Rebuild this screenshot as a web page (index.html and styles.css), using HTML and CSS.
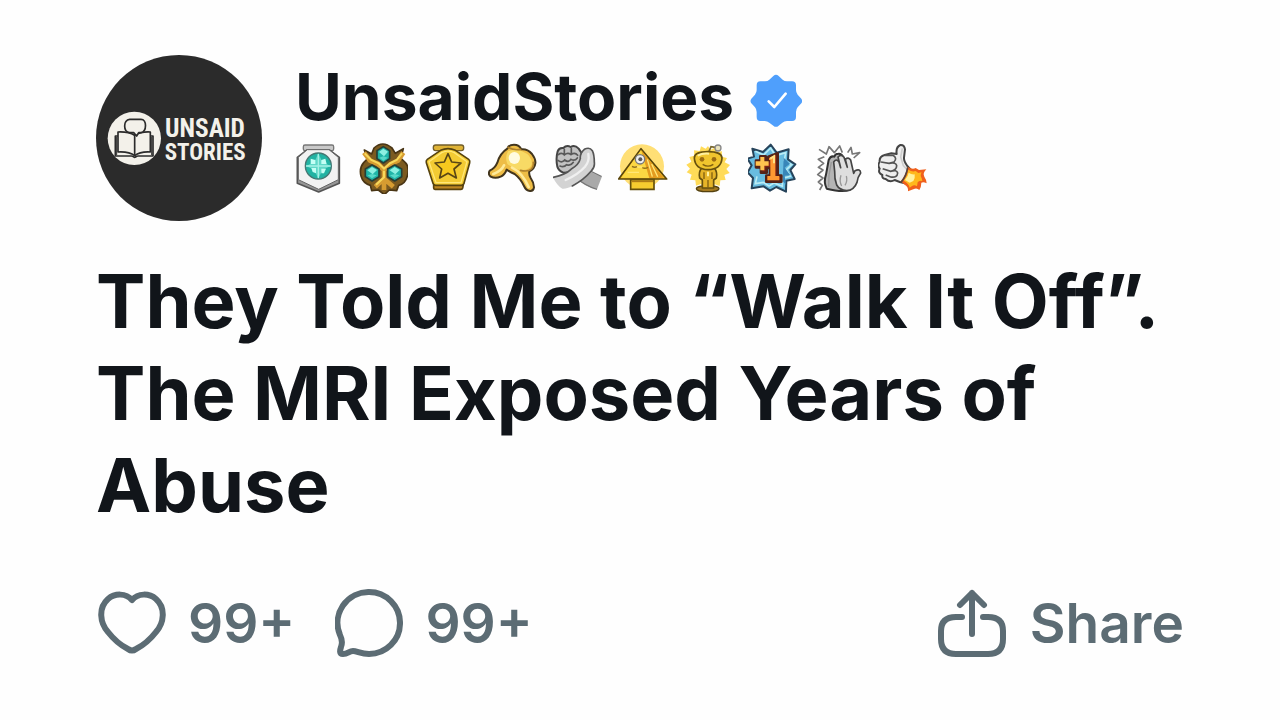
FILE: index.html
```
<!DOCTYPE html>
<html lang="en">
<head>
    <meta charset="UTF-8">
    <meta name="viewport" content="width=device-width, initial-scale=1.0">
    <title>UnsaidStories</title>
    <link rel="stylesheet" href="styles.css">
</head>
<body>
    <article class="post">
        <header class="header">
            <svg class="avatar" viewBox="0 0 498 498" role="img" aria-label="Unsaid Stories">
                <circle cx="249" cy="249" r="249" fill="#2b2b2b"/>
                <circle cx="115" cy="250" r="80" fill="#f3f1ea"/>
                <g fill="none" stroke="#2b2b2b" stroke-width="5" stroke-linejoin="round" stroke-linecap="round">
                    <path d="M66 243h-8v60h48c6 0 7 4 10 4s5-4 10-4h45v-60h-8"/>
                    <path d="M62 247v52M167 247v52" stroke-width="3"/>
                    <path d="M66 231c18-1 35 1 50 10 15-9 30-11 47-10v60c-17-1-33 0-47 11-14-11-32-12-50-11z" fill="#f3f1ea"/>
                    <path d="M116 241v60"/>
                    <path d="M101 193h34c18 0 18 36 0 40h-7l-6 10-9-10h-12c-20-3-20-38 0-40z" fill="#f3f1ea"/>
                </g>
                <g class="avatar-text" fill="#f3f1ea">
                    <text x="207" y="246">UNSAID</text>
                    <text x="206" y="316" class="avatar-text-small">STORIES</text>
                </g>
            </svg>
            <div class="author">
                <div class="name-row">
                    <h2 class="name">UnsaidStories</h2>
                    <svg class="verified" viewBox="0 0 156 162" role="img" aria-label="Verified">
                        <path d="M70 6q8-7 16 0l12 11q5 5 13 5h15q12 0 12 12v14q0 8 5 14l11 12q5 7 0 14l-11 12q-5 6-5 14v14q0 13-12 13h-15q-8 0-14 5l-11 9q-8 7-16 0l-12-9q-6-5-14-5H31q-11 0-11-13v-14q0-8-5-14L4 88q-5-7 0-14l11-12q5-6 5-14V34q0-12 11-12h14q8 0 13-5z" fill="#4f9ffc"/>
                        <path d="M56 82l17 17 34-40" fill="none" stroke="#fff" stroke-width="8" stroke-linecap="round" stroke-linejoin="round"/>
                    </svg>
                </div>
                <div class="badges">
                    <!-- hexagon medal -->
                    <svg viewBox="9 18 150 156">
                        <rect x="40" y="27" width="91" height="17" rx="5" fill="#c9c9c9" stroke="#777" stroke-width="4"/>
                        <path d="M51 42h67l30 22v78l-62 26-64-26V64z" fill="#969696" stroke="#555" stroke-width="5" stroke-linejoin="round"/>
                        <path d="M52 41h65l28 23v67l-59 29-61-29V64z" fill="#f2f2f2" stroke="#666" stroke-width="3" stroke-linejoin="round"/>
                        <circle cx="85" cy="90" r="39" fill="#22b3a3" stroke="#457773" stroke-width="4"/>
                        <path d="M85 52l12 26 25 12-25 12-12 26-12-26-25-12 25-12z" fill="#60d8c8"/>
                        <path d="M85 54v72M48 90h74" stroke="#a4f1e5" stroke-width="4"/>
                        <path d="M62 68l14 4v12H62zM94 72l12-4 4 16H94zM64 96h14v16l-10-4zM94 98h14l-6 14h-8z" fill="#c5fff5"/>
                    </svg>
                    <!-- three gems -->
                    <svg viewBox="204 18 150 156">
                        <path d="M252 36q26-24 54 0l10 16 24-14-8 28 14 14q14 14 6 40-6 24-26 28l-6 16-22-2-15 14-18-14-20 2-4-16q-22-6-28-28-6-24 8-40l12-12-10-26 22 12z" fill="#7b5a20" stroke="#493515" stroke-width="5" stroke-linejoin="round"/>
                        <path d="M222 50l18 24 24 10 18 18 20-18 22-10 16-24M282 102v26l-26 24M282 128l28 24M282 128v34" fill="none" stroke="#d79c31" stroke-width="14" stroke-linejoin="round"/>
                        <path d="M224 52l20 20 22 10 16 16 18-16 20-10 16-20M282 104v20l-24 22" fill="none" stroke="#f7d95c" stroke-width="6"/>
                        <g fill="#20b5a8" stroke="#263f37" stroke-width="5" stroke-linejoin="round">
                            <path d="M280 32l19 12v24l-19 13-19-13V44z"/>
                            <path d="M246 87l21 12v23l-21 13-20-13V99z"/>
                            <path d="M314 87l21 12v23l-21 13-21-13V99z"/>
                        </g>
                        <path d="M280 38l14 9-12 14-15-13zM246 93l15 9-13 13-16-12zM314 93l15 9-13 13-17-12z" fill="#8df0e2"/>
                        <path d="M268 65l12 9 13-9-13-4zM233 118l13 9 14-9-14-4zM300 118l14 9 14-9-14-4z" fill="#58d8c8"/>
                    </svg>
                    <!-- star medal -->
                    <svg viewBox="9 18 150 156">
                        <rect x="40" y="27" width="91" height="17" rx="7" fill="#dfb336" stroke="#725e2b" stroke-width="4"/>
                        <path d="M41 140v16q0 4 4 4h78q4 0 5-4l3-16z" fill="#bd8622" stroke="#59420d" stroke-width="5" stroke-linejoin="round"/>
                        <path d="M62 43q22-10 44 0l40 27q5 4 3 10l-17 62q-2 6-8 6H47q-6 0-8-6L19 80q-2-6 3-10z" fill="#f3cb33" stroke="#55420e" stroke-width="5" stroke-linejoin="round"/>
                        <path d="M65 50q20-9 38 0l38 27-18 63H48L27 77z" fill="none" stroke="#ffe777" stroke-width="4"/>
                        <path d="M84 53l11 25 28 3-21 18 7 27-25-14-25 14 6-27-20-18 28-3z" fill="#f7c91e" stroke="#594615" stroke-width="5" stroke-linejoin="round"/>
                    </svg>
                    <!-- hand pointing down -->
                    <svg viewBox="204 18 150 156">
                        <path d="M262 38q4-12 20-12 16 0 22 14 18-2 32 14 12 16 10 28-2 16-18 24-2 10 4 20 10 14 10 28-2 12-12 11-12-1-18-15-10-22-28-36-14-6-24-13-6 16-18 21-16 7-30 0-9-8-3-18 16-7 23-24 8-28 30-42z" fill="#eebd46" stroke="#42351d" stroke-width="6" stroke-linejoin="round"/>
                        <path d="M264 46q22-10 42 0 30 12 30 38-6 18-30 18-24-2-44-18-8-20 2-38z" fill="#f8da65"/>
                        <ellipse cx="283" cy="66" rx="17" ry="18" fill="#fffbe0"/>
                        <path d="M276 95q30 14 50 58M252 88q-8 18-32 26" fill="none" stroke="#ffeb9a" stroke-width="8" stroke-linecap="round"/>
                        <path d="M302 103q14 4 26 0 14-6 12-24M264 34q18 10 38 6" fill="none" stroke="#ad802d" stroke-width="5" stroke-linecap="round"/>
                    </svg>
                    <!-- clasped hands -->
                    <svg viewBox="24 18 150 156">
                        <path d="M92 122l34-20 44 22-14 36q-36-8-64-38z" fill="#a9a9a9"/>
                        <path d="M92 124q28 26 64 36M130 102l40 20" fill="none" stroke="#777" stroke-width="4"/>
                        <path d="M38 46q4-12 17-10 10-10 22-3 12-8 24 5l12 18 2 34-26 18-34 2q-14-5-18-18-5-24 1-46z" fill="#c2c2c2" stroke="#444" stroke-width="6" stroke-linejoin="round"/>
                        <path d="M118 40q16-8 24 4 6 12 6 36 2 14-10 26-22 26-56 44-20 10-30 8-16-8-28-34 38-8 54-24 26-14 28-32 2-16 12-28z" fill="#d3d3d3"/>
                        <path d="M106 68q-2-16 12-28 16-8 24 4 6 12 6 36 2 14-10 26-22 26-56 44M24 124q38-8 54-24 24-14 28-32" fill="none" stroke="#555" stroke-width="5" stroke-linecap="round"/>
                        <path d="M40 56q10-8 18 1 10-9 20-1 12-8 20 2M39 73q12 9 20-1 11 9 19-2 11 7 19-4M45 90q12 5 20-4 12 5 20-7M58 40v14M79 38v14" fill="none" stroke="#595959" stroke-width="5" stroke-linecap="round"/>
                        <path d="M130 54q4 22-10 38-22 24-58 40" fill="none" stroke="#f0f0f0" stroke-width="7" stroke-linecap="round"/>
                    </svg>
                    <!-- pyramid with eye -->
                    <svg viewBox="219 18 150 156">
                        <circle cx="291" cy="91" r="66" fill="#ffdf75"/>
                        <path d="M288 38l77 91H221z" fill="#f4bd22" stroke="#59450b" stroke-width="5" stroke-linejoin="round"/>
                        <path d="M288 42l25 84-84-1z" fill="#fbd743"/>
                        <path d="M290 44l23 82 43-1z" fill="#e39b20"/>
                        <path d="M307 70l15 52M320 84l18 38M248 109h34M264 93h28" stroke="#ffe777" stroke-width="4"/>
                        <path d="M257 131h70v29h-70z" fill="#f6cc2f" stroke="#65500d" stroke-width="5"/>
                        <path d="M260 136h64" stroke="#ae7c17" stroke-width="5"/>
                        <circle cx="285" cy="70" r="14" fill="#eee" stroke="#777" stroke-width="4"/>
                        <circle cx="286" cy="70" r="6" fill="#555"/>
                        <path d="M261 91q8 5 15 1M292 95q8 4 17-1" fill="none" stroke="#927018" stroke-width="4"/>
                    </svg>
                    <!-- golden mascot -->
                    <svg viewBox="24 18 150 156">
                        <path d="M99 30l7 12 15-8 3 14 17-2-1 16 16 4-7 13 16 8-11 12 10 12-16 6 4 15-16 1-2 17-15-5-10 14-11-11-12 9-8-13-15 5-2-16-16-2 5-15-15-7 10-11-11-12 15-9-6-14 15-4-1-16 17 2 4-14 14 7z" fill="#ffdb58"/>
                        <path d="M101 49l7-17 18 3" fill="none" stroke="#77662e" stroke-width="5"/>
                        <circle cx="129" cy="36" r="9" fill="#e9e2bd" stroke="#888" stroke-width="4"/>
                        <ellipse cx="98" cy="158" rx="34" ry="9" fill="#a57b21" stroke="#55420f" stroke-width="4"/>
                        <path d="M80 96h38q10 12 6 30l-8 6v24H82v-24l-8-6q-4-18 6-30z" fill="#e6b428" stroke="#66500e" stroke-width="5" stroke-linejoin="round"/>
                        <path d="M58 66q0-19 41-19t42 19q-2 34-42 35-39-1-41-35z" fill="#f0c52e" stroke="#66500e" stroke-width="5"/>
                        <circle cx="81" cy="70" r="7" fill="#9b6c12"/>
                        <circle cx="117" cy="70" r="7" fill="#9b6c12"/>
                        <path d="M83 85q16 11 32 0M87 109v20M111 109v20M99 132v23" fill="none" stroke="#81600f" stroke-width="4"/>
                        <path d="M68 59q15-8 34-6M99 107v14" fill="none" stroke="#fff1a0" stroke-width="6"/>
                    </svg>
                    <!-- plus one -->
                    <svg viewBox="219 18 150 156">
                        <path d="M232 38l32 10 23-22 18 24 36-10-2 30 22 15-15 17 13 27-25 5-1 33-29-14-19 11-19-13-36 6 4-31-16-17 12-21-13-20 20-6z" fill="#68bce0" stroke="#27445b" stroke-width="6" stroke-linejoin="round"/>
                        <path d="M241 46l25 11 21-21 14 23 31-9-4 24 22 12-16 15 12 20-24 6v24l-25-10-15 9-17-11-24 4 5-22" fill="none" stroke="#b9ecf5" stroke-width="5"/>
                        <path d="M326 65l-3 70 10 12-4-28 17-1-17-23 16-12z" fill="#3886b9"/>
                        <path d="M243 74h13V61h16v15h8V62l28-10v67h11v18h-45v-18h11V96h-10v14h-17V94h-15z" fill="#8c2515" stroke="#542318" stroke-width="8" stroke-linejoin="round"/>
                        <path d="M242 76h14V63h12v13h13v13h-13v14h-12V89h-14z" fill="#ffc34f"/>
                        <path d="M282 66l19-10v64h12v13h-36v-13h9V72h-4z" fill="#ff9a32"/>
                        <path d="M286 68l11-7v21" fill="none" stroke="#ffe284" stroke-width="6"/>
                    </svg>
                    <!-- clapping hands -->
                    <svg viewBox="24 18 150 156">
                        <path d="M42 40l22 14 8-22 16 18 16-20 8 20M128 50l10-16 4 20 22-4-18 16M58 62l-18 8 16 12-16 12 14 8-16 14 16 10-14 12 12 10-8 14" fill="none" stroke="#777" stroke-width="5" stroke-linejoin="round"/>
                        <path d="M65 158q-10-20-2-42l8-44q6-14 17-10 2-9 12-9 10-1 13 9l14 22 8 26-4 52q-18 8-66-4z" fill="#b5b5b5" stroke="#333" stroke-width="6" stroke-linejoin="round"/>
                        <path d="M89 106l-3-28q8-12 16 0l5 17-8-32q10-10 18 1l10 30-6-24q9-8 16 2l9 40 4-8q16-7 17 7-9 12-11 28-9 24-31 25-22-2-30-17-7-18-6-41z" fill="#dedede" stroke="#444" stroke-width="5" stroke-linejoin="round"/>
                        <path d="M79 78l-7 40-1 34M108 118q-6 18 2 32M124 120q4 15-4 28" fill="none" stroke="#999" stroke-width="4"/>
                    </svg>
                    <!-- rocket thumb -->
                    <svg viewBox="219 18 150 156">
                        <path d="M275 54q-3-21 11-27 12-1 14 13l-3 25q-1 10 10 25l11 12-18 40q-16-3-31-10-14 9-27-3-12-1-10-12-14-6-8-19-8-10 0-20-2-17 15-21l20-5z" fill="#eee" stroke="#444" stroke-width="6" stroke-linejoin="round"/>
                        <path d="M239 58h25q14 8 3 20l-15 4-24-4M252 82q22-4 23 7 0 13-18 17l-24-8M258 106q17-6 20 5-1 15-21 12l-15-6" fill="none" stroke="#555" stroke-width="5"/>
                        <path d="M292 37l-5 26 8 26 12 13" fill="none" stroke="#ccc" stroke-width="5"/>
                        <path d="M308 92q14 10 24 4l10 6 22-2q-12 12-6 22 6 8 7 20-10-6-16-2 0 12-6 22-8-8-18-2l-16 6q2-14-10-20l-12-10q16-20 21-44z" fill="#f0601c"/>
                        <path d="M310 101q12 8 22 4l8 6 10-2q-6 10 0 18l2 8q-10-2-14 4l-2 12q-8-6-16 0l-6 4q-2-12-18-21 12-16 14-33z" fill="#ffb81c"/>
                        <path d="M311 110q8 6 18 5 2 12-4 20l-11 5-14-8q10-12 11-22z" fill="#fff2a0"/>
                        <path d="M308 94q-4 26-19 44" fill="none" stroke="#54443c" stroke-width="5"/>
                    </svg>
                </div>
            </div>
        </header>

        <h1 class="title">They Told Me to “Walk It Off”. The MRI Exposed Years of Abuse</h1>

        <footer class="actions">
            <button type="button" class="action" aria-label="Like, 99+">
                <svg viewBox="0 0 68 68" class="icon">
                    <path d="M34 11C28 4 17 4 10 10 0 19 2 34 10 43 17 52 24 57 30 60Q34 63 38 60C44 57 51 52 58 43 66 34 68 19 58 10 51 4 40 4 34 11Z"/>
                </svg>
                <span>99+</span>
            </button>
            <button type="button" class="action" aria-label="Comments, 99+">
                <svg viewBox="0 0 68 68" class="icon">
                    <path d="M34 3a31 31 0 1 1 0 62C26 65 22 62 18 62 14 62 13 65 8 65 4 65 5 61 6 58 8 53 7 50 5 46A31 31 0 0 1 34 3Z"/>
                </svg>
                <span>99+</span>
            </button>
            <button type="button" class="action share">
                <svg viewBox="0 0 68 68" class="icon">
                    <path d="M34 45V4M22 16L34 4l12 12M24 28h-6Q3 28 3 42v8Q3 65 18 65h32Q65 65 65 50v-8Q65 28 50 28h-5"/>
                </svg>
                <span>Share</span>
            </button>
        </footer>
    </article>
</body>
</html>
```
FILE: styles.css
```
* {
    box-sizing: border-box;
}

body {
    margin: 0;
    background: #fefefe;
    color: #11151a;
    font-family: Inter, "Liberation Sans", sans-serif;
}

.post {
    padding: 55px 96px;
}

.header {
    display: flex;
    gap: 31px;
}

.avatar {
    flex: none;
    width: 166px;
    height: 166px;
}

.avatar-text {
    font-family: "Roboto Condensed", "Liberation Sans Narrow", "Open Sans Condensed", Roboto, sans-serif;
    font-size: 76px;
    font-weight: 700;
}

.avatar-text-small {
    font-size: 69px;
}

.author {
    padding-top: 5px;
}

.name-row {
    display: flex;
    align-items: center;
    gap: 16px;
    padding-left: 2px;
}

.name {
    margin: 0;
    font-size: 64px;
    line-height: 74px;
    font-weight: 700;
}

.verified {
    width: 52px;
    height: 54px;
    margin-top: 8px;
}

.badges {
    display: flex;
    gap: 15px;
    margin-top: 8px;
}

.badges svg {
    width: 50px;
    height: 52px;
}

.title {
    margin: 34px 0 0;
    font-size: 74px;
    line-height: 92px;
    font-weight: 700;
}

.actions {
    display: flex;
    gap: 40px;
    margin-top: 56px;
    padding-left: 2px;
}

.action {
    display: flex;
    align-items: center;
    gap: 22px;
    padding: 0;
    border: none;
    background: none;
    color: #5c6c74;
    font-family: inherit;
    font-size: 55px;
    line-height: 72px;
    font-weight: 600;
    cursor: pointer;
}

.action.share {
    gap: 24px;
    margin-left: auto;
}

.icon {
    width: 68px;
    height: 68px;
    fill: none;
    stroke: currentColor;
    stroke-width: 6;
    stroke-linecap: round;
    stroke-linejoin: round;
}
```
